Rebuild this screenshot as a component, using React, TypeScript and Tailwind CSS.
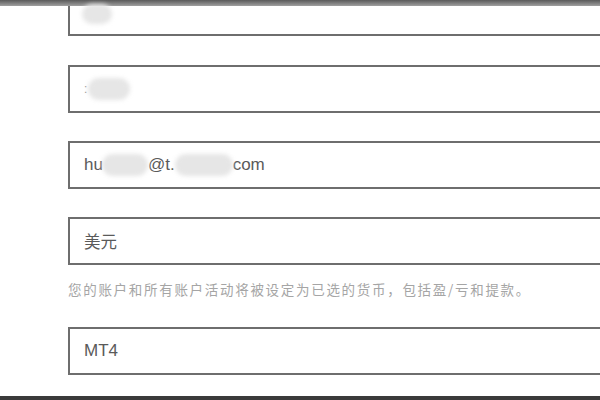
function Blob({ className }: { className: string }) {
  return <span className={"inline-block rounded-full bg-[#e6e6e6] blur-[2px] " + className} />;
}

function Field({ children, className = "" }: { children?: React.ReactNode; className?: string }) {
  return (
    <div
      className={
        "flex h-[48px] w-[600px] shrink-0 items-center border-2 border-[#6e6e6e] bg-white pl-[14px] text-[17px] text-[#5a5a5a] " +
        className
      }
    >
      {children}
    </div>
  );
}

export default function App() {
  return (
    <div className="flex h-[400px] w-[600px] flex-col overflow-hidden bg-white font-['Liberation_Sans','Noto_Sans_CJK_SC',sans-serif]">
      <div className="h-[6px] shrink-0 bg-gradient-to-b from-[#5a5a5a] to-[#a0a0a0]" />
      <div className="pl-[68px]">
        <div className="flex h-[30px] w-[600px] items-start border-2 border-t-0 border-[#6e6e6e] pl-[12px]">
          <Blob className="h-[20px] w-[30px] -mt-[2px]" />
        </div>
        <Field className="mt-[29px]">
          <span className="text-[#999] text-[12px]">:</span>
          <Blob className="h-[22px] w-[42px] ml-[1px]" />
        </Field>
        <Field className="mt-[28px]">
          <span>hu</span>
          <Blob className="h-[22px] w-[46px] -ml-[1px]" />
          <span>@t.</span>
          <Blob className="h-[22px] w-[58px]" />
          <span>com</span>
        </Field>
        <Field className="mt-[28px]">
          <span className="font-['Noto_Sans_CJK_SC',sans-serif] text-[16.5px]">美元</span>
        </Field>
        <p className="mt-[14px] font-['Noto_Sans_CJK_SC',sans-serif] text-[13.5px] leading-[20px] tracking-[1.7px] text-[#a5a5a5]">
          您的账户和所有账户活动将被设定为已选的货币，包括盈/亏和提款。
        </p>
        <Field className="mt-[28px]">
          <span>MT4</span>
        </Field>
      </div>
      <div className="mt-auto h-[4px] shrink-0 bg-[#3a3a3a]" />
    </div>
  );
}
